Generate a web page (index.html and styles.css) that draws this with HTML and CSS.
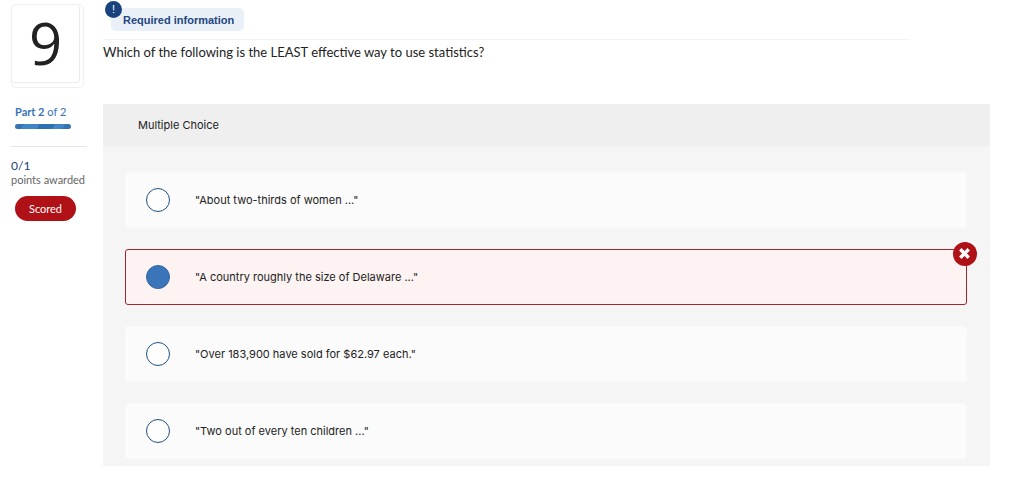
FILE: index.html
```html
<!DOCTYPE html>
<html lang="en">
<head>
  <meta charset="UTF-8">
  <meta name="viewport" content="width=device-width, initial-scale=1.0">
  <title>Question 9</title>
  <link rel="stylesheet" href="styles.css">
</head>
<body>
  <!-- Question number, part and score -->
  <aside class="sidebar">
    <div class="number-card">
      <div class="number">9</div>
    </div>
    <div class="part">
      <p><strong>Part 2</strong> of 2</p>
      <div class="part-bar"></div>
    </div>
    <div class="score">
      <p class="points">0/1</p>
      <p class="points-label">points awarded</p>
      <button type="button" class="scored">Scored</button>
    </div>
  </aside>

  <main class="content">
    <div class="required-row">
      <button type="button" class="required">
        <span class="alert">!</span>
        Required information
      </button>
    </div>

    <p class="question" id="question">Which of the following is the LEAST effective way to use statistics?</p>

    <!-- Answers -->
    <section class="panel">
      <h2>Multiple Choice</h2>
      <div class="options" role="radiogroup" aria-labelledby="question">
        <label class="option">
          <input type="radio" name="answer">
          <span>"About two-thirds of women ..."</span>
        </label>
        <label class="option wrong">
          <input type="radio" name="answer" checked>
          <span>"A country roughly the size of Delaware ..."</span>
          <svg class="wrong-icon" viewBox="0 0 24 24" aria-hidden="true">
            <circle cx="12" cy="12" r="12" fill="#b01116"/>
            <path d="M8.500 8.500l6 6M14.500 8.500l-6 6" stroke="#fff" stroke-width="3.400" stroke-linecap="square"/>
          </svg>
        </label>
        <label class="option">
          <input type="radio" name="answer">
          <span>"Over 183,900 have sold for $62.97 each."</span>
        </label>
        <label class="option">
          <input type="radio" name="answer">
          <span>"Two out of every ten children ..."</span>
        </label>
      </div>
    </section>
  </main>
</body>
</html>
```

FILE: styles.css
```css
/* Basic Reset */
body, h2, p, div, input, button {
  margin: 0;
  padding: 0;
  box-sizing: border-box;
}

body {
  font-family: Inter, "Liberation Sans", sans-serif;
  font-size: 11px;
  line-height: 16px;
  color: #222;
  background-color: #fff;
  display: flex;
  gap: 16px;
  padding: 4px 34px 12px 11px;
}

button {
  border: none;
  cursor: pointer;
}

/* Left column */
.sidebar {
  flex: 0 0 76px;
  min-width: 0;
  font-family: Lato, "Liberation Sans", sans-serif;
}

.number-card {
  width: 73px;
  padding: 0 3px 4px 0;
  border: 1px solid #efefef;
  border-radius: 5px;
}

.number {
  height: 78px;
  border: solid #ebebeb;
  border-width: 0 1px 1px 0;
  border-radius: 4px;
  font-family: "Open Sans", sans-serif;
  font-size: 58px;
  font-weight: 500;
  line-height: 76px;
  text-align: center;
}

.part {
  padding: 16px 0 17px 4px;
  border-bottom: 1px solid #e4e4e4;
  color: #3873b5;
}

.part-bar {
  width: 56px;
  height: 5px;
  margin-top: 4px;
  border-radius: 3px;
  background: linear-gradient(120deg, #3573b5 15%, #4285c6 15%, #4285c6 42%, #2d70b3 42%, #2d70b3 68%, #4285c6 68%, #4285c6 85%, #3573b5 85%);
}

.score {
  padding-top: 11px;
}

.points {
  font-size: 12px;
  color: #1c4175;
}

.points-label {
  line-height: 12px;
  white-space: nowrap;
  color: #666;
}

.scored {
  width: 61px;
  height: 25px;
  margin: 10px 0 0 4px;
  border-radius: 13px;
  background-color: #b01116;
  font-family: inherit;
  font-size: 11px;
  color: #fff;
}

/* Question */
.content {
  flex: 1;
  min-width: 0;
}

.required-row {
  width: 91%;
  padding: 4px 0 8px 8px;
  border-bottom: 1px solid #f3f3f3;
}

.required {
  position: relative;
  display: block;
  height: 23px;
  padding: 0 10px 0 12px;
  border-radius: 5px;
  background-color: #eaf0f8;
  font-family: "Liberation Sans", sans-serif;
  font-size: 11px;
  font-weight: bold;
  color: #234780;
}

.alert {
  position: absolute;
  top: -7px;
  left: -6px;
  width: 17px;
  border-radius: 50%;
  background-color: #18427d;
  font-size: 11px;
  font-weight: normal;
  line-height: 17px;
  color: #fff;
}

.question {
  padding: 4px 0 44px;
  font-family: Lato, "Liberation Sans", sans-serif;
  font-size: 13px;
}

/* Answer panel */
.panel {
  background-color: #f5f5f5;
}

h2 {
  padding: 13px 35px;
  background-color: #efefef;
  font-size: 11px;
  font-weight: normal;
}

.options {
  display: flex;
  flex-direction: column;
  gap: 21px;
  padding: 26px 23px 7px 22px;
}

.option {
  position: relative;
  display: flex;
  align-items: center;
  gap: 25px;
  box-sizing: border-box;
  height: 56px;
  padding: 0 20px;
  border: 1px solid #fafafa;
  border-radius: 3px;
  background-color: #fbfbfb;
}

.option input {
  appearance: none;
  flex: none;
  width: 24px;
  height: 24px;
  border: 1px solid #1f5081;
  border-radius: 50%;
  background-color: #fff;
}

.option input:checked {
  border-color: #3568a4;
  background-color: #3a75ba;
}

.wrong {
  border-color: #a3252e;
  background-color: #fdf3f3;
}

.wrong-icon {
  position: absolute;
  top: -8px;
  right: -11px;
  width: 24px;
  height: 24px;
}
```
